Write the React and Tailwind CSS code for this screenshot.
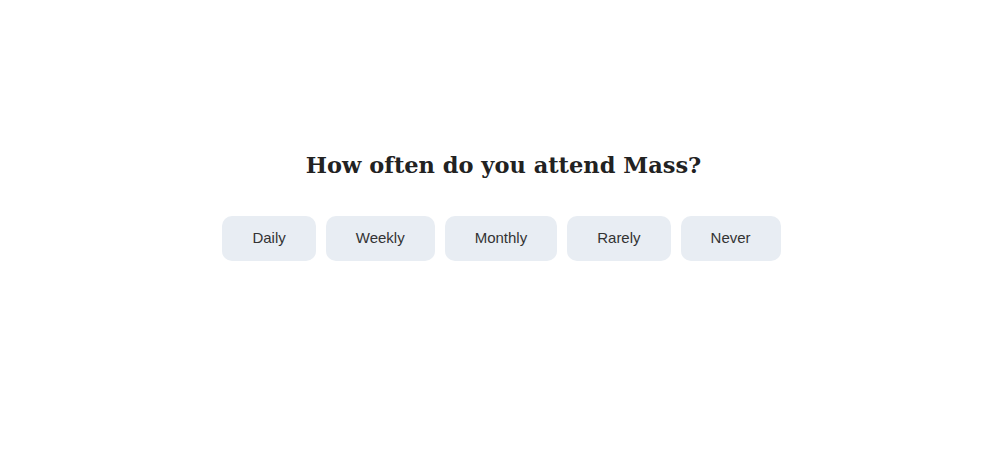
import React, { useState } from 'react';

const options = ['Daily', 'Weekly', 'Monthly', 'Rarely', 'Never'];

export default function App() {
  const [picked, setPicked] = useState(null);

  return (
    <div className="min-h-[465px] w-full bg-white flex flex-col items-center pt-[149px] pl-[5px]">
      <h2
        className="text-[22.5px] font-bold text-[#222] leading-[33px] pl-[4px]"
        style={{ fontFamily: '"DejaVu Serif", "Liberation Serif", serif' }}
      >
        How often do you attend Mass?
      </h2>

      <div className="flex gap-[10px] mt-[34px]">
        {options.map((o) => (
          <button
            key={o}
            onClick={() => setPicked(o)}
            className={`h-[45px] px-[30px] rounded-[10px] text-[15px] text-[#333] transition-colors ${picked === o ? 'bg-[#d5dde8]' : 'bg-[#e8edf3]'}`}
            style={{ fontFamily: '"Liberation Sans", Arial, sans-serif' }}
          >
            {o}
          </button>
        ))}
      </div>
    </div>
  );
}
